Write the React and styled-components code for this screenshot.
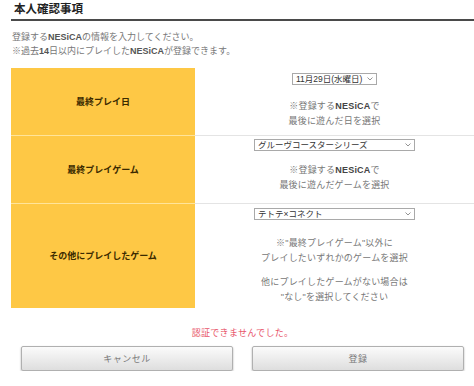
import React from "react";
import styled, { createGlobalStyle } from "styled-components";

const Global = createGlobalStyle`
  html, body { margin: 0; padding: 0; background: #fff; }
  body { font-family: "Liberation Sans", "Noto Sans CJK JP", sans-serif; }
`;

const Page = styled.div`
  padding: 0 0 0 11px;
  width: 463px;
`;

const Title = styled.h2`
  margin: 0;
  padding: 3px 3px 3px;
  font-size: 11.5px;
  line-height: 13px;
  font-weight: bold;
  color: #222;
  border-bottom: 2px solid #4a4a4a;
`;

const Intro = styled.p`
  margin: 9px 0 0 1px;
  font-size: 9px;
  line-height: 14px;
  color: #777;
  b { color: #555; }
`;

const Table = styled.div`
  margin-top: 10px;
  display: grid;
  grid-template-columns: 184px 1fr;
`;

const Label = styled.div`
  background: #fec845;
  border-bottom: 1px solid ${p => (p.$last ? "#fec845" : "#ffe49a")};
  min-height: ${p => p.$h}px;
  display: flex;
  align-items: center;
  justify-content: center;
  font-size: 9px;
  font-weight: bold;
  color: #3a2a00;
  box-sizing: border-box;
`;

const Value = styled.div`
  border-bottom: 1px solid ${p => (p.$last ? "transparent" : "#e4e4e4")};
  min-height: ${p => p.$h}px;
  box-sizing: border-box;
  padding-top: ${p => p.$pt}px;
  display: flex;
  flex-direction: column;
  align-items: center;
  text-align: center;
`;

const SelectWrap = styled.div`
  position: relative;
  width: ${p => p.$w}px;
  height: 12px;
`;

const Select = styled.select`
  display: block;
  appearance: none;
  -webkit-appearance: none;
  width: 100%;
  height: 12px;
  margin: 0;
  padding: 0 0 0 3px;
  border: 1px solid #a9a9a9;
  border-radius: 0;
  background: #fff;
  font-family: "Liberation Sans", "Noto Sans CJK JP", sans-serif;
  font-size: 8.5px;
  line-height: 10px;
  color: #333;
  box-sizing: border-box;
`;

const Chevron = styled.svg`
  position: absolute;
  right: 4px;
  top: 4px;
  display: block;
  pointer-events: none;
`;

const Note = styled.p`
  margin: ${p => p.$mt}px 0 0;
  font-size: 9px;
  line-height: 15px;
  color: #777;
  letter-spacing: 0.2px;
  b { color: #444; }
`;

const Error = styled.p`
  margin: 19px 0 0;
  text-align: center;
  font-size: 9px;
  line-height: 12px;
  color: #e8556a;
  letter-spacing: 0.3px;
`;

const Buttons = styled.div`
  display: flex;
  gap: 19px;
  padding: 7px 10px 0;
`;

const Button = styled.button`
  flex: 1;
  height: 25px;
  border: 1px solid #b0b0b0;
  border-radius: 2px;
  background: linear-gradient(#fbfbfb, #dedede);
  box-shadow: 0 1px 2px rgba(0, 0, 0, 0.35);
  font-family: "Liberation Sans", "Noto Sans CJK JP", sans-serif;
  font-size: 9px;
  color: #7a7a7a;
  letter-spacing: 0.5px;
`;

function Dropdown({ width, value }) {
  return (
    <SelectWrap $w={width}>
      <Select defaultValue={value}>
        <option>{value}</option>
      </Select>
      <Chevron width="6" height="4" viewBox="0 0 6 4">
        <path d="M0.5 0.5 L3 3 L5.5 0.5" fill="none" stroke="#888" strokeWidth="0.9" />
      </Chevron>
    </SelectWrap>
  );
}

export default function App() {
  return (
    <>
      <Global />
      <Page>
        <Title>本人確認事項</Title>
        <Intro>
          登録する<b>NESiCA</b>の情報を入力してください。
          <br />
          ※過去<b>14</b>日以内にプレイした<b>NESiCA</b>が登録できます。
        </Intro>
        <Table>
          <Label $h={68}>最終プレイ日</Label>
          <Value $h={68} $pt={5}>
            <Dropdown width={85} value="11月29日(水曜日)" />
            <Note $mt={14}>
              ※登録する<b>NESiCA</b>で
              <br />
              最後に遊んだ日を選択
            </Note>
          </Value>
          <Label $h={68}>最終プレイゲーム</Label>
          <Value $h={68} $pt={3}>
            <Dropdown width={161} value="グルーヴコースターシリーズ" />
            <Note $mt={12}>
              ※登録する<b>NESiCA</b>で
              <br />
              最後に遊んだゲームを選択
            </Note>
          </Value>
          <Label $h={104} $last>その他にプレイしたゲーム</Label>
          <Value $h={104} $pt={4} $last>
            <Dropdown width={161} value="テトテ×コネクト" />
            <Note $mt={16}>
              ※"最終プレイゲーム"以外に
              <br />
              プレイしたいずれかのゲームを選択
            </Note>
            <Note $mt={9}>
              他にプレイしたゲームがない場合は
              <br />
              "なし"を選択してください
            </Note>
          </Value>
        </Table>
        <Error>認証できませんでした。</Error>
        <Buttons>
          <Button>キャンセル</Button>
          <Button>登録</Button>
        </Buttons>
      </Page>
    </>
  );
}
